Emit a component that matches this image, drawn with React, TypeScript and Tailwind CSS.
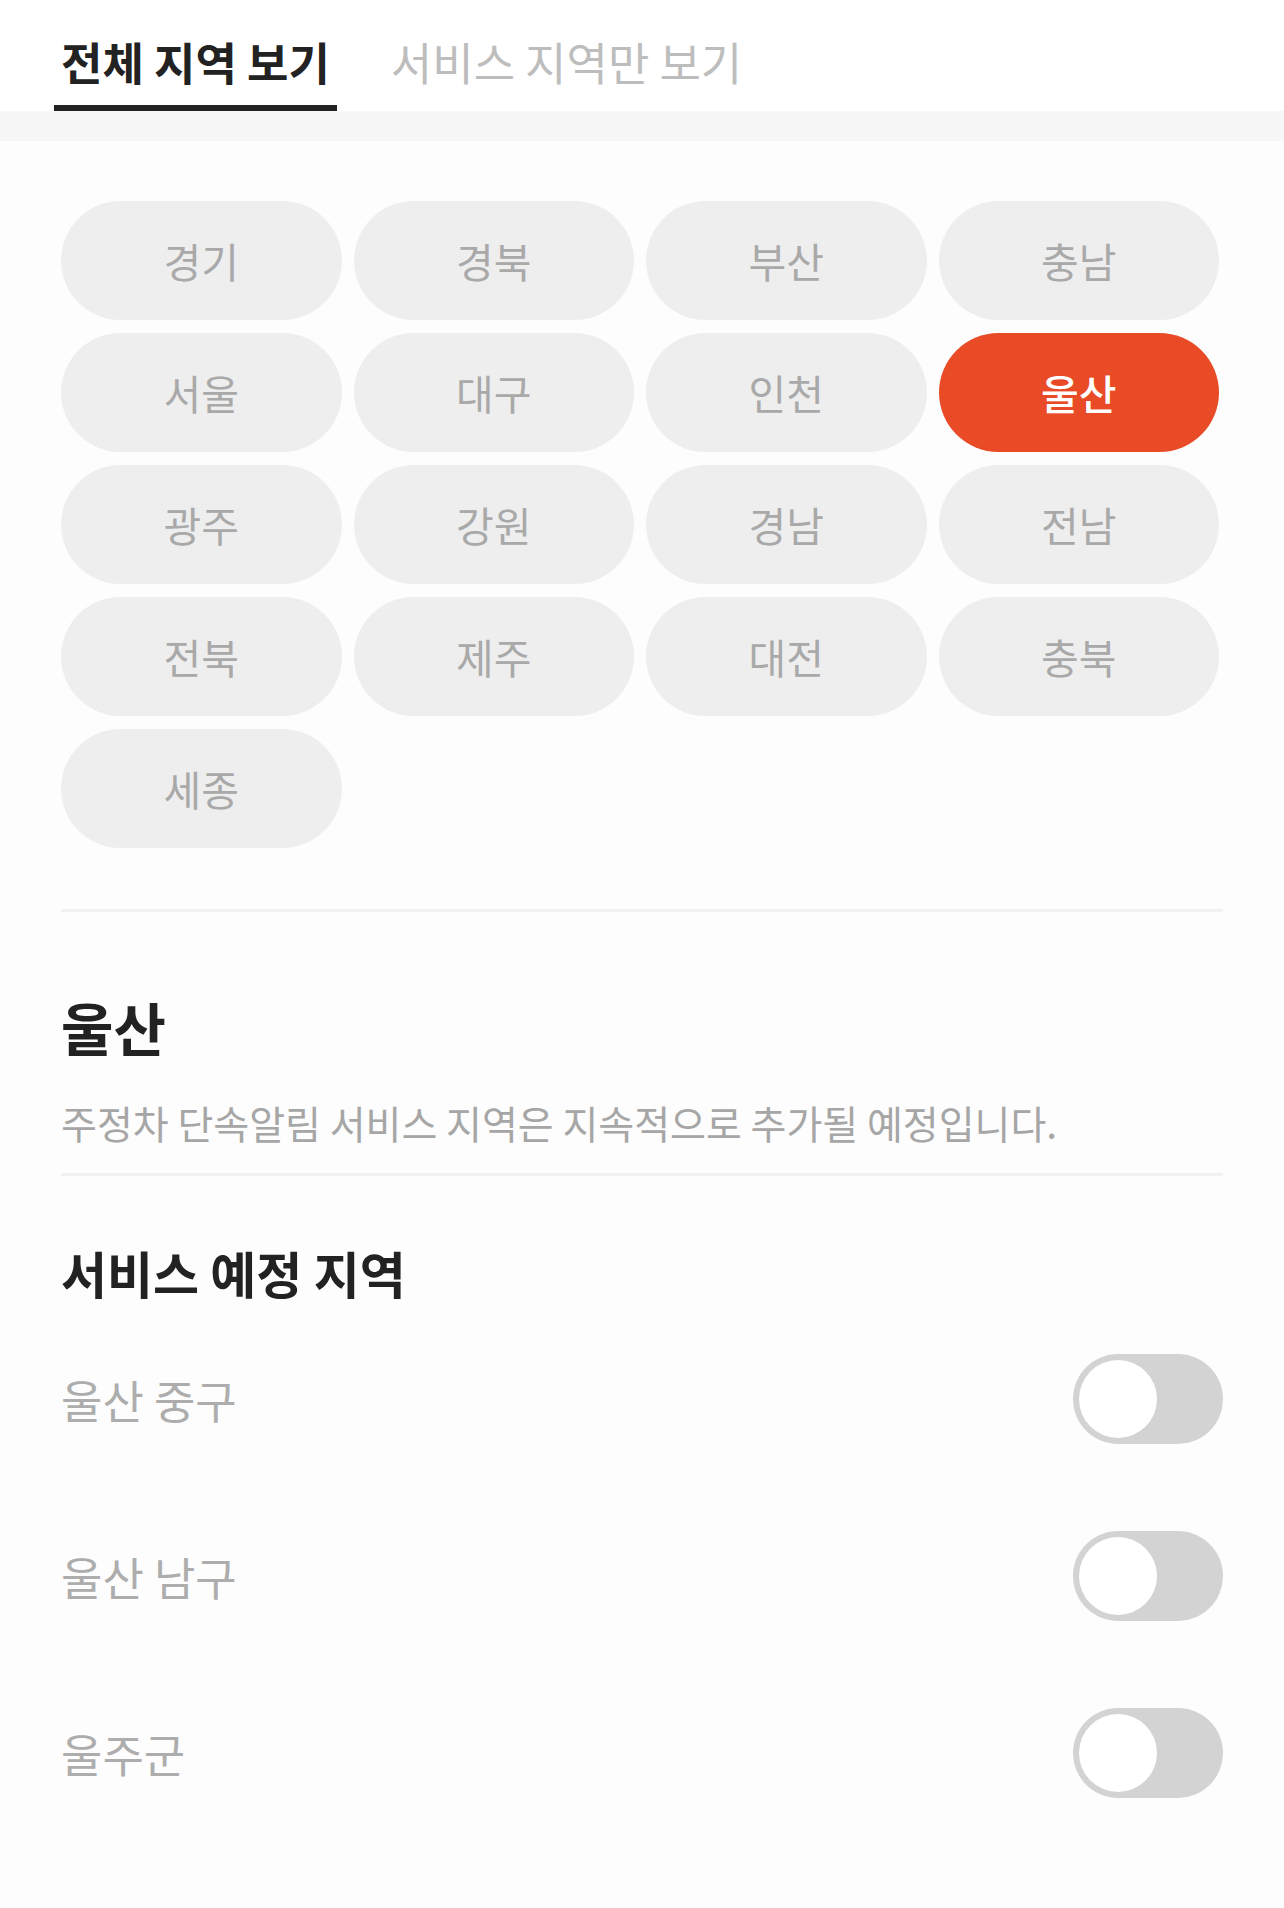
import { useState } from 'react';

const REGIONS = [
  '경기', '경북', '부산', '충남',
  '서울', '대구', '인천', '울산',
  '광주', '강원', '경남', '전남',
  '전북', '제주', '대전', '충북',
  '세종',
];

const PLANNED = ['울산 중구', '울산 남구', '울주군'];

function Toggle({ on, onChange }: { on: boolean; onChange: () => void }) {
  return (
    <button
      onClick={onChange}
      className={`flex h-[90px] w-[150px] items-center rounded-full p-[6px] ${
        on ? 'justify-end bg-[#e84b25]' : 'justify-start bg-[#d3d3d3]'
      }`}
    >
      <span className="h-[78px] w-[78px] rounded-full bg-white" />
    </button>
  );
}

export default function App() {
  const [tab, setTab] = useState(0);
  const [selected, setSelected] = useState('울산');
  const [enabled, setEnabled] = useState<Record<string, boolean>>({});

  return (
    <div className="min-h-[1908px] bg-[#fdfdfd] font-['Noto_Sans_CJK_KR',sans-serif]">
      {/* Tabs */}
      <div className="flex gap-[47px] bg-white pl-[54px]">
        {['전체 지역 보기', '서비스 지역만 보기'].map((label, i) => (
          <button
            key={label}
            onClick={() => setTab(i)}
            className={`flex h-[111px] items-center border-b-[6px] px-[7px] pt-[17px] text-[45px] leading-none ${
              tab === i
                ? 'border-[#222222] font-bold text-[#222222]'
                : 'border-transparent font-normal text-[#bdbdbd]'
            }`}
          >
            {label}
          </button>
        ))}
      </div>
      <div className="h-[30px] bg-[#f7f7f7]" />

      <div className="px-[61px]">
        {/* Region chips */}
        <div className="grid grid-cols-4 gap-x-[12px] gap-y-[13px] pr-[4px] pt-[60px]">
          {REGIONS.map((r) => (
            <button
              key={r}
              onClick={() => setSelected(r)}
              className={`flex h-[119px] items-center justify-center rounded-full text-[41px] leading-none ${
                selected === r
                  ? 'bg-[#e84b25] font-medium text-white'
                  : 'bg-[#eeeeee] text-[#a9a9a9]'
              }`}
            >
              {r}
            </button>
          ))}
        </div>

        <div className="mt-[61px] h-[3px] bg-[#f2f2f2]" />

        <h2 className="mt-[86px] text-[57px] font-bold leading-none text-[#222222]">
          {selected}
        </h2>
        <p className="mt-[48px] text-[39px] leading-none text-[#a6a6a6]">
          주정차 단속알림 서비스 지역은 지속적으로 추가될 예정입니다.
        </p>

        <div className="mt-[31px] h-[3px] bg-[#f2f2f2]" />

        <h3 className="mt-[71px] text-[50px] font-bold leading-none text-[#222222]">
          서비스 예정 지역
        </h3>

        <div className="mt-[57px] flex flex-col gap-[87px] pb-[100px]">
          {PLANNED.map((name) => (
            <div key={name} className="flex items-center justify-between">
              <span className="text-[45px] leading-none text-[#adadad]">{name}</span>
              <Toggle
                on={!!enabled[name]}
                onChange={() => setEnabled((s) => ({ ...s, [name]: !s[name] }))}
              />
            </div>
          ))}
        </div>
      </div>
    </div>
  );
}
